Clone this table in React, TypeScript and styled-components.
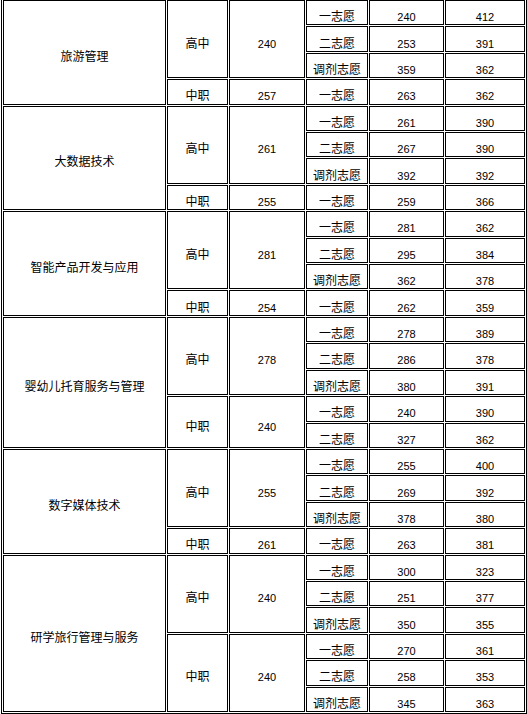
import React from "react";
import styled, { createGlobalStyle } from "styled-components";

const GlobalStyle = createGlobalStyle`
  html, body {
    margin: 0;
    padding: 0;
    background: #fff;
  }
  body {
    overflow: hidden;
    font-family: "Liberation Sans", "Noto Sans CJK SC", sans-serif;
  }
`;

// Score table
const Table = styled.table`
  margin: -2px 0 0 1px;
  width: 526px;
  height: 716px;
  table-layout: fixed;
  border-collapse: separate;
  border-spacing: 1px;
  border: 1px solid #000;
  background: #fff;
  color: #000;
`;

const Row = styled.tr`
  height: 25px;
`;

const Cell = styled.td<{ $num?: boolean }>`
  box-sizing: border-box;
  border: 1px solid #000;
  padding: 9px 0 0;
  text-align: center;
  vertical-align: middle;
  font-size: ${({ $num }) => ($num ? "11px" : "12px")};
  line-height: 12px;
  white-space: nowrap;
  overflow: hidden;
`;

type Choice = [string, number, number];

interface Group {
  type: string;
  score: number;
  rows: Choice[];
}

interface Major {
  name: string;
  groups: Group[];
}

const majors: Major[] = [
  {
    name: "旅游管理",
    groups: [
      {
        type: "高中",
        score: 240,
        rows: [
          ["一志愿", 240, 412],
          ["二志愿", 253, 391],
          ["调剂志愿", 359, 362],
        ],
      },
      { type: "中职", score: 257, rows: [["一志愿", 263, 362]] },
    ],
  },
  {
    name: "大数据技术",
    groups: [
      {
        type: "高中",
        score: 261,
        rows: [
          ["一志愿", 261, 390],
          ["二志愿", 267, 390],
          ["调剂志愿", 392, 392],
        ],
      },
      { type: "中职", score: 255, rows: [["一志愿", 259, 366]] },
    ],
  },
  {
    name: "智能产品开发与应用",
    groups: [
      {
        type: "高中",
        score: 281,
        rows: [
          ["一志愿", 281, 362],
          ["二志愿", 295, 384],
          ["调剂志愿", 362, 378],
        ],
      },
      { type: "中职", score: 254, rows: [["一志愿", 262, 359]] },
    ],
  },
  {
    name: "婴幼儿托育服务与管理",
    groups: [
      {
        type: "高中",
        score: 278,
        rows: [
          ["一志愿", 278, 389],
          ["二志愿", 286, 378],
          ["调剂志愿", 380, 391],
        ],
      },
      {
        type: "中职",
        score: 240,
        rows: [
          ["一志愿", 240, 390],
          ["二志愿", 327, 362],
        ],
      },
    ],
  },
  {
    name: "数字媒体技术",
    groups: [
      {
        type: "高中",
        score: 255,
        rows: [
          ["一志愿", 255, 400],
          ["二志愿", 269, 392],
          ["调剂志愿", 378, 380],
        ],
      },
      { type: "中职", score: 261, rows: [["一志愿", 263, 381]] },
    ],
  },
  {
    name: "研学旅行管理与服务",
    groups: [
      {
        type: "高中",
        score: 240,
        rows: [
          ["一志愿", 300, 323],
          ["二志愿", 251, 377],
          ["调剂志愿", 350, 355],
        ],
      },
      {
        type: "中职",
        score: 240,
        rows: [
          ["一志愿", 270, 361],
          ["二志愿", 258, 353],
          ["调剂志愿", 345, 363],
        ],
      },
    ],
  },
];

const colWidths = [163, 61, 76, 62, 75, 80];

const App = () => {
  const body: React.ReactNode[] = [];

  majors.forEach((major, mi) => {
    const span = major.groups.reduce((n, g) => n + g.rows.length, 0);
    major.groups.forEach((group, gi) => {
      group.rows.forEach((choice, ri) => {
        body.push(
          <Row key={`${mi}-${gi}-${ri}`}>
            {gi === 0 && ri === 0 && <Cell rowSpan={span}>{major.name}</Cell>}
            {ri === 0 && <Cell rowSpan={group.rows.length}>{group.type}</Cell>}
            {ri === 0 && (
              <Cell $num rowSpan={group.rows.length}>
                {group.score}
              </Cell>
            )}
            <Cell>{choice[0]}</Cell>
            <Cell $num>{choice[1]}</Cell>
            <Cell $num>{choice[2]}</Cell>
          </Row>
        );
      });
    });
  });

  return (
    <>
      <GlobalStyle />
      <Table>
        <colgroup>
          {colWidths.map((w, i) => (
            <col key={i} style={{ width: w }} />
          ))}
        </colgroup>
        <tbody>{body}</tbody>
      </Table>
    </>
  );
};

export default App;
